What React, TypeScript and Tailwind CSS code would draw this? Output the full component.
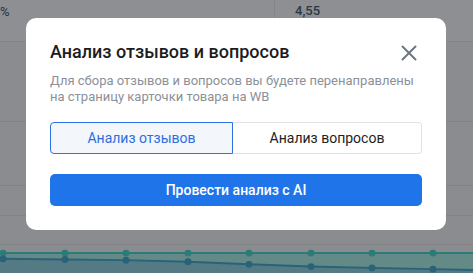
const dotsX = [3, 65, 126, 188, 249, 311, 372, 433];
const blueY = [258.3, 259, 259.7, 261.3, 264, 266.3, 267.7, 269];
const CHART_TOP = 244;

function Chart() {
  const green = 252.3 - CHART_TOP;
  const bluePts = dotsX.map((x, i) => `${x},${blueY[i] - CHART_TOP}`);
  const blueLine = `-5,${blueY[0] - CHART_TOP} ${bluePts.join(" ")} 480,${270 - CHART_TOP}`;
  return (
    <svg className="block w-full flex-1" viewBox="0 0 473 29" preserveAspectRatio="none">
      <rect x="0" y={green} width="473" height={29 - green} fill="#648a88" />
      <polygon points={`${blueLine} 480,29 -5,29`} fill="#547a83" />
      <line x1="0" y1={green} x2="473" y2={green} stroke="#2b7b76" strokeWidth="2" />
      <polyline points={blueLine} fill="none" stroke="#28637a" strokeWidth="2" />
      {dotsX.map((x) => (
        <circle key={`g${x}`} cx={x} cy={green} r="3.5" fill="#2b7b76" />
      ))}
      {dotsX.map((x, i) => (
        <circle key={`b${x}`} cx={x} cy={blueY[i] - CHART_TOP} r="3.5" fill="#28637a" />
      ))}
    </svg>
  );
}

function CloseIcon() {
  return (
    <svg width="16" height="16" viewBox="0 0 16 16" fill="none" stroke="currentColor" strokeWidth="2" strokeLinecap="round">
      <path d="M1.5 1.5l13 13M14.5 1.5l-13 13" />
    </svg>
  );
}

export default function App() {
  return (
    <div className="relative w-[473px] h-[273px] overflow-hidden bg-[#8a8c8f] font-['Roboto','Liberation_Sans',sans-serif]">
      {/* page behind the overlay */}
      <div className="flex flex-col h-full">
        <div className="flex h-[42px] bg-[#8d8f92] border-b border-[#818386]">
          <div className="w-[275px] border-r border-[#838588] pt-[2px] text-[13px] text-[#283340]">%</div>
          <div className="pl-[20px] pt-[1px] text-[13px] font-medium text-[#2a3949]">4,55</div>
        </div>
        <div className="h-[80px] border-b border-[#818386]" />
        <div className="h-[64px] border-b border-[#818386]" />
        <div className="h-[30px] border-b border-[#818386]" />
        <div className="h-[29px] border-b border-[#818386]" />
        <Chart />
      </div>

      {/* modal */}
      <div className="absolute left-[26px] top-[18px] w-[420px] rounded-[10px] bg-white px-6 pt-[22px] pb-6">
        <div className="flex items-start justify-between">
          <h2 className="text-[18px] leading-6 font-medium text-[#1c1c1e]">Анализ отзывов и вопросов</h2>
          <button className="mt-[5px] mr-[5px] text-[#6c7684]">
            <CloseIcon />
          </button>
        </div>
        <p className="mt-[9px] text-[13px] leading-4 text-[#8b9099]">
          Для сбора отзывов и вопросов вы будете перенаправлены
          <br />
          на страницу карточки товара на WB
        </p>
        <div className="mt-[17px] flex h-[32px] text-[14px]">
          <button className="w-[183px] rounded-l-[4px] border border-[#2a72e5] bg-[#f3f6fb] text-[#2f6ee0]">
            Анализ отзывов
          </button>
          <button className="flex-1 rounded-r-[4px] border border-l-0 border-[#e2e3e5] bg-white text-[#222]">
            Анализ вопросов
          </button>
        </div>
        <button className="mt-[20px] h-[32px] w-full rounded-[5px] bg-[#1f74ea] text-[14px] font-medium text-white">
          Провести анализ с AI
        </button>
      </div>
    </div>
  );
}
